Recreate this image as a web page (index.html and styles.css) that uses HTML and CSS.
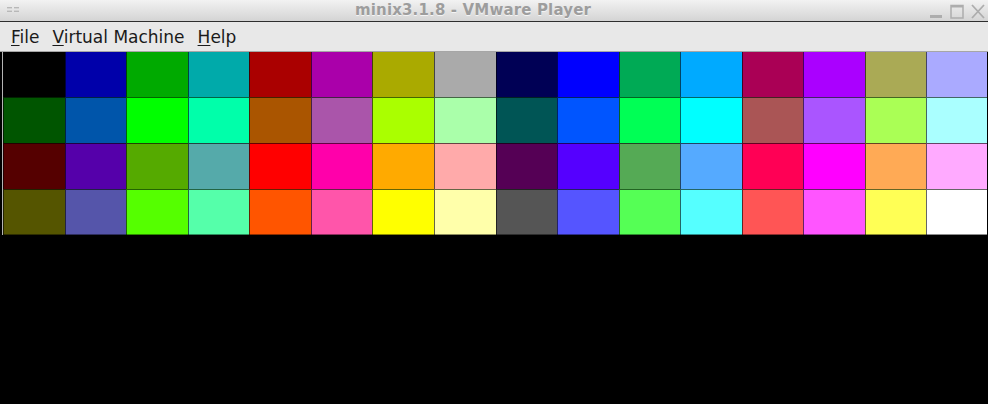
FILE: index.html
```html
<!DOCTYPE html>
<html>
<head>
    <meta charset="utf-8">
    <title>minix3.1.8 - VMware Player</title>
    <link rel="stylesheet" href="styles.css">
</head>
<body>
<div class="title-bar">
    <svg class="title-grip" width="12" height="6" viewBox="0 0 12 6">
        <rect x="0" y="0" width="5" height="1.4" fill="#b8b8b8"/>
        <rect x="7" y="0" width="5" height="1.4" fill="#b8b8b8"/>
        <rect x="0" y="3.6" width="5" height="1.4" fill="#b8b8b8"/>
        <rect x="7" y="3.6" width="5" height="1.4" fill="#b8b8b8"/>
    </svg>
    <div class="title-text">minix3.1.8 - VMware Player</div>
    <div class="title-buttons">
        <svg width="14" height="15" viewBox="0 0 14 15"><rect x="1" y="11" width="12" height="3" fill="#adadad"/></svg>
        <svg width="14" height="15" viewBox="0 0 14 15"><rect x="1" y="1.5" width="12" height="12.5" fill="none" stroke="#adadad" stroke-width="1.5"/><rect x="1" y="1" width="12" height="2.5" fill="#adadad"/></svg>
        <svg width="14" height="15" viewBox="0 0 14 15"><path d="M1 1 L13 14 M13 1 L1 14" stroke="#adadad" stroke-width="1.8"/></svg>
    </div>
</div>
<div class="menu-bar">
    <div class="menu-item"><u>F</u>ile</div>
    <div class="menu-item"><u>V</u>irtual Machine</div>
    <div class="menu-item"><u>H</u>elp</div>
</div>
<div class="screen">
    <div class="palette" id="palette"></div>
</div>
<script src="palette.js"></script>
</body>
</html>
```

FILE: palette.js
```js
// EGA 64 colour test pattern, 4 rows of 16
var levels = ['00', '55', 'aa', 'ff'];
var grid = document.getElementById('palette');

function egaColor(n) {
    // bits: 5=r low, 4=g low, 3=b low, 2=r high, 1=g high, 0=b high
    var r = ((n >> 2) & 1) * 2 + ((n >> 5) & 1);
    var g = ((n >> 1) & 1) * 2 + ((n >> 4) & 1);
    var b = (n & 1) * 2 + ((n >> 3) & 1);
    return '#' + levels[r] + levels[g] + levels[b];
}

for (var row = 0; row < 4; row++) {
    for (var col = 0; col < 16; col++) {
        var n = row * 16 + col;
        var cell = document.createElement('div');
        cell.className = 'swatch';
        cell.style.background = egaColor(n);
        grid.appendChild(cell);
    }
}
```

FILE: styles.css
```css
html, body {
    margin: 0;
    padding: 0;
}

body {
    width: 988px;
    height: 404px;
    background: #000;
    overflow: hidden;
    font-family: "DejaVu Sans", sans-serif;
}

.title-bar {
    height: 21px;
    border-bottom: 1px solid #2e2e2e;
    background: linear-gradient(#f2f2f2, #d4d4d4);
    display: flex;
    align-items: center;
    position: relative;
}

.title-grip {
    margin: 0 0 2px 7px;
}

.title-text {
    position: absolute;
    left: 355px;
    top: 1px;
    font-size: 15px;
    font-weight: bold;
    color: #9d9d9d;
    text-shadow: 0 1px 0 #f4f4f4;
    letter-spacing: 0.15px;
}

.title-buttons {
    margin-left: auto;
    margin-right: 3px;
    display: flex;
    gap: 7px;
    padding-top: 1px;
}

.menu-bar {
    height: 29px;
    background: #e8e8e8;
    border-bottom: 1px solid #a6a6a6;
    display: flex;
    align-items: center;
    padding-left: 11px;
    gap: 13px;
}

.menu-item {
    font-size: 17px;
    color: #1a1a1a;
    padding-top: 1px;
}

.menu-item u {
    text-underline-offset: 2px;
}

.screen {
    height: 352px;
    border-left: 2px solid #000;
    display: flex;
}

.palette {
    flex: 1;
    border-left: 1px solid #b4b4b4;
    display: grid;
    grid-template-columns: repeat(16, 1fr);
    grid-template-rows: 45px 46px 46px 46px;
    align-self: flex-start;
}

.swatch {
    box-shadow: inset 1px 1px 0 rgba(0, 0, 0, 0.6);
}

.swatch:nth-child(-n+16) {
    box-shadow: inset 1px 0 0 rgba(0, 0, 0, 0.6);
}

.swatch:nth-child(16n) {
    box-shadow: inset 1px 1px 0 rgba(0, 0, 0, 0.6), inset -1px 0 0 #000;
}

.swatch:nth-child(16) {
    box-shadow: inset 1px 0 0 rgba(0, 0, 0, 0.6), inset -1px 0 0 #000;
}

.swatch:nth-child(n+49) {
    box-shadow: inset 1px 1px 0 rgba(0, 0, 0, 0.6), inset 0 -1px 0 rgba(0, 0, 0, 0.45);
}

.swatch:nth-child(64) {
    box-shadow: inset 1px 1px 0 rgba(0, 0, 0, 0.6), inset 0 -1px 0 rgba(0, 0, 0, 0.45), inset -1px 0 0 #000;
}
```
